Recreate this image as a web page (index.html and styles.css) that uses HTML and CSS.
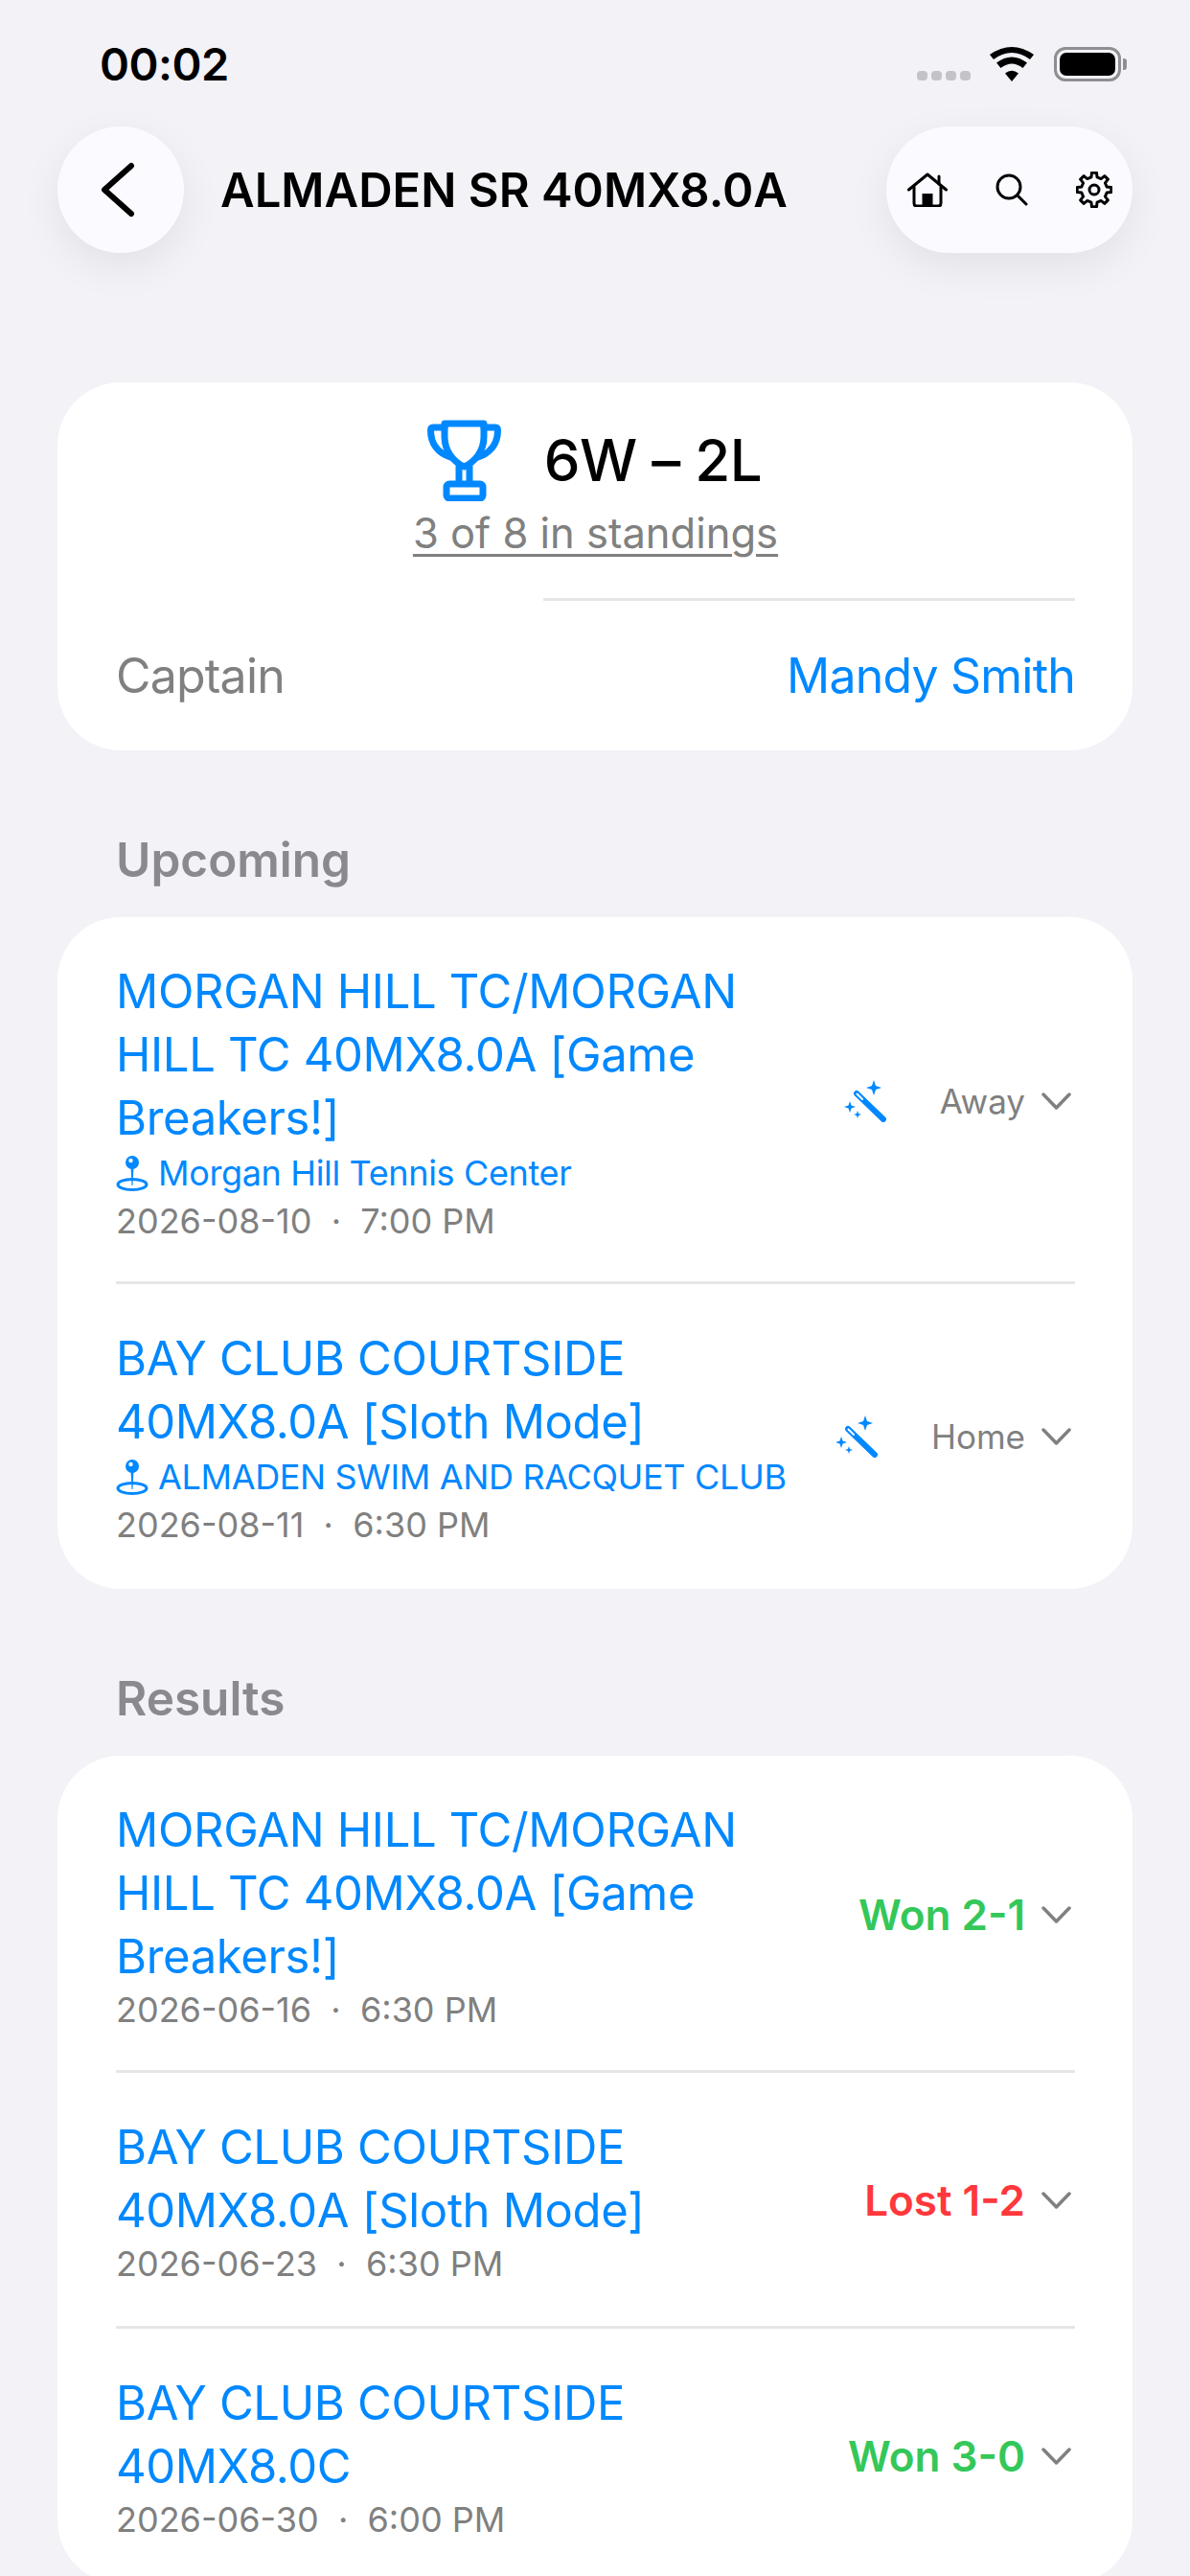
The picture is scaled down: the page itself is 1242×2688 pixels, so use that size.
FILE: index.html
```html
<!DOCTYPE html>
<html lang="en">
<head>
    <meta charset="UTF-8">
    <meta name="viewport" content="width=device-width, initial-scale=1.0">
    <title>ALMADEN SR 40MX8.0A</title>
    <link rel="stylesheet" href="styles.css">
</head>
<body>

    <!-- Status bar -->
    <div class="status-bar">
        <span class="status-time">00:02</span>
        <div class="status-icons">
            <div class="signal"><i></i><i></i><i></i><i></i></div>
            <svg class="wifi" viewBox="0 0 46 36"><path d="M23 36 L16 27.5 Q23 22 30 27.5Z"/><path d="M11.5 22 L7 16.5 Q23 4.5 39 16.5 L34.5 22 Q23 13 11.5 22Z"/><path d="M4 13 L0 8 Q23 -8 46 8 L42 13 Q23 -1 4 13Z"/></svg>
            <div class="battery"><div class="battery-level"></div></div>
        </div>
    </div>

    <!-- Nav bar -->
    <header class="nav-bar">
        <div class="back-button">
            <svg viewBox="0 0 36 58"><path d="M32 4 L4 29 L32 54"/></svg>
        </div>
        <h1 class="nav-title">ALMADEN SR 40MX8.0A</h1>
        <div class="nav-actions">
            <svg class="icon-home" viewBox="0 0 42 36"><path d="M1.5 18 L21 2 L40.5 18"/><path d="M33 4 V12"/><path d="M7 15 V32 Q7 35 10 35 H32 Q35 35 35 32 V15"/><rect class="solid" x="15.500" y="22" width="11" height="13"/></svg>
            <svg class="icon-search" viewBox="0 0 34 34"><circle cx="14" cy="14" r="12"/><path d="M23 23 L32 32"/></svg>
            <svg class="icon-gear" viewBox="0 0 38 38"><polygon points="15.96,5.85 16.5,1.18 21.5,1.18 22.04,5.85 26.15,7.55 29.83,4.62 33.38,8.17 30.45,11.85 32.15,15.96 36.82,16.5 36.82,21.5 32.15,22.04 30.45,26.15 33.38,29.83 29.83,33.38 26.15,30.45 22.04,32.15 21.5,36.82 16.5,36.82 15.96,32.15 11.85,30.45 8.17,33.38 4.62,29.83 7.55,26.15 5.85,22.04 1.18,21.5 1.18,16.5 5.85,15.96 7.55,11.85 4.62,8.17 8.17,4.62 11.85,7.55"/><circle cx="19" cy="19" r="5"/></svg>
        </div>
    </header>

    <!-- Team summary -->
    <section class="card summary-card">
        <div class="record">
            <svg class="trophy" viewBox="0 0 77 85"><path d="M18 4 H59 V18 C59 32 50 44 38.500 49 C27 44 18 32 18 18Z"/><path d="M18 8 H6 Q3.500 8 3.500 11 C3.500 26 12 35 24 39"/><path d="M59 8 H71 Q73.500 8 73.500 11 C73.500 26 65 35 53 39"/><path d="M33 49 V66 M44 49 V66"/><rect x="20" y="67" width="38" height="15" rx="3"/></svg>
            <span class="record-text">6W – 2L</span>
        </div>
        <div class="standings">3 of 8 in standings</div>
        <div class="divider"></div>
        <div class="captain-row">
            <span class="captain-label">Captain</span>
            <span class="captain-name">Mandy Smith</span>
        </div>
    </section>

    <!-- Upcoming -->
    <h2 class="section-title">Upcoming</h2>
    <section class="card">
        <div class="match">
            <div class="match-info">
                <div class="match-title">MORGAN HILL TC/MORGAN<br>HILL TC 40MX8.0A [Game<br>Breakers!]</div>
                <div class="match-place">
                    <svg class="pin" viewBox="0 0 34 38"><circle cx="17" cy="8" r="7"/><circle class="pin-dot" cx="15.500" cy="6" r="2.200"/><path d="M15.500 12 H18.500 L17.500 32 H16.500Z"/><ellipse class="pin-ring" cx="17" cy="31" rx="15" ry="5.500"/></svg>
                    <span>Morgan Hill Tennis Center</span>
                </div>
                <div class="match-date">2026-08-10 &nbsp;·&nbsp; 7:00 PM</div>
            </div>
            <div class="match-side">
                <svg class="wand" viewBox="0 0 44 44"><path d="M31 0 L33 6 L39 8 L33 10 L31 16 L29 10 L23 8 L29 6Z"/><path d="M6 22 L7.500 26.500 L12 28 L7.500 29.500 L6 34 L4.500 29.500 L0 28 L4.500 26.500Z"/><path d="M14 32 L15 35 L18 36 L15 37 L14 40 L13 37 L10 36 L13 35Z"/><path class="wand-stick" d="M13 14 L41 41"/><path class="wand-slit" d="M13.500 14.500 L19 20"/></svg>
                <span class="match-where">Away</span>
                <svg class="chevron" viewBox="0 0 31 18"><path d="M2 2 L15.500 16 L29 2"/></svg>
            </div>
        </div>
        <div class="match">
            <div class="match-info">
                <div class="match-title">BAY CLUB COURTSIDE<br>40MX8.0A [Sloth Mode]</div>
                <div class="match-place">
                    <svg class="pin" viewBox="0 0 34 38"><circle cx="17" cy="8" r="7"/><circle class="pin-dot" cx="15.500" cy="6" r="2.200"/><path d="M15.500 12 H18.500 L17.500 32 H16.500Z"/><ellipse class="pin-ring" cx="17" cy="31" rx="15" ry="5.500"/></svg>
                    <span>ALMADEN SWIM AND RACQUET CLUB</span>
                </div>
                <div class="match-date">2026-08-11 &nbsp;·&nbsp; 6:30 PM</div>
            </div>
            <div class="match-side">
                <svg class="wand" viewBox="0 0 44 44"><path d="M31 0 L33 6 L39 8 L33 10 L31 16 L29 10 L23 8 L29 6Z"/><path d="M6 22 L7.500 26.500 L12 28 L7.500 29.500 L6 34 L4.500 29.500 L0 28 L4.500 26.500Z"/><path d="M14 32 L15 35 L18 36 L15 37 L14 40 L13 37 L10 36 L13 35Z"/><path class="wand-stick" d="M13 14 L41 41"/><path class="wand-slit" d="M13.500 14.500 L19 20"/></svg>
                <span class="match-where">Home</span>
                <svg class="chevron" viewBox="0 0 31 18"><path d="M2 2 L15.500 16 L29 2"/></svg>
            </div>
        </div>
    </section>

    <!-- Results -->
    <h2 class="section-title">Results</h2>
    <section class="card">
        <div class="match">
            <div class="match-info">
                <div class="match-title">MORGAN HILL TC/MORGAN<br>HILL TC 40MX8.0A [Game<br>Breakers!]</div>
                <div class="match-date">2026-06-16 &nbsp;·&nbsp; 6:30 PM</div>
            </div>
            <div class="match-side">
                <span class="score won">Won 2-1</span>
                <svg class="chevron" viewBox="0 0 31 18"><path d="M2 2 L15.500 16 L29 2"/></svg>
            </div>
        </div>
        <div class="match">
            <div class="match-info">
                <div class="match-title">BAY CLUB COURTSIDE<br>40MX8.0A [Sloth Mode]</div>
                <div class="match-date">2026-06-23 &nbsp;·&nbsp; 6:30 PM</div>
            </div>
            <div class="match-side">
                <span class="score lost">Lost 1-2</span>
                <svg class="chevron" viewBox="0 0 31 18"><path d="M2 2 L15.500 16 L29 2"/></svg>
            </div>
        </div>
        <div class="match">
            <div class="match-info">
                <div class="match-title">BAY CLUB COURTSIDE<br>40MX8.0C</div>
                <div class="match-date">2026-06-30 &nbsp;·&nbsp; 6:00 PM</div>
            </div>
            <div class="match-side">
                <span class="score won">Won 3-0</span>
                <svg class="chevron" viewBox="0 0 31 18"><path d="M2 2 L15.500 16 L29 2"/></svg>
            </div>
        </div>
    </section>

</body>
</html>
```

FILE: styles.css
```css
/* General */
* {
    margin: 0;
    padding: 0;
    box-sizing: border-box;
}

html {
    height: 2688px;
    overflow: hidden;
}

body {
    height: 2688px;
    overflow: hidden;
    background-color: #f2f2f7;
    font-family: Inter, "Noto Sans", sans-serif;
    color: #000;
}

/* Status bar */
.status-bar {
    height: 132px;
    display: flex;
    justify-content: space-between;
    align-items: flex-start;
    padding: 38px 72px 0 104px;
}

.status-time {
    font-size: 47px;
    line-height: 58px;
    font-weight: 600;
    letter-spacing: -0.5px;
}

.status-icons {
    display: flex;
    align-items: flex-end;
    padding-top: 11px;
}

.signal {
    display: flex;
    gap: 4px;
    margin: 0 20px 0 0;
    padding-bottom: 1px;
}

.signal i {
    width: 11px;
    height: 10px;
    border-radius: 4px;
    background-color: #c4c4c8;
}

.wifi {
    width: 46px;
    height: 36px;
    fill: #000;
    margin-right: 21px;
}

.battery {
    position: relative;
    width: 70px;
    height: 36px;
    border: 3px solid #8e8e93;
    border-radius: 12px;
    padding: 3px;
}

/* battery nub */
.battery::after {
    content: "";
    position: absolute;
    right: -9px;
    top: 9px;
    width: 4px;
    height: 12px;
    border-radius: 0 3px 3px 0;
    background-color: #8e8e93;
}

.battery-level {
    height: 100%;
    border-radius: 7px;
    background-color: #000;
}

/* Nav bar */
.nav-bar {
    height: 132px;
    display: flex;
    align-items: center;
    padding: 0 60px;
}

.back-button {
    width: 132px;
    height: 132px;
    flex-shrink: 0;
    display: flex;
    align-items: center;
    justify-content: center;
    padding-right: 7px;
    border-radius: 50%;
    background-color: #fbfbff;
    box-shadow: 0 14px 44px rgba(0, 0, 0, 0.07);
}

.back-button svg {
    width: 36px;
    height: 58px;
    fill: none;
    stroke: #000;
    stroke-width: 6;
    stroke-linecap: round;
    stroke-linejoin: round;
}

.nav-title {
    flex: 1;
    margin-left: 38px;
    font-size: 49px;
    font-weight: 600;
    white-space: nowrap;
}

.nav-actions {
    width: 257px;
    height: 132px;
    flex-shrink: 0;
    display: flex;
    align-items: center;
    justify-content: space-between;
    padding: 0 21px 0 22px;
    border-radius: 66px;
    background-color: #fbfbff;
    box-shadow: 0 14px 44px rgba(0, 0, 0, 0.07);
}

.nav-actions svg {
    fill: none;
    stroke: #000;
    stroke-width: 3;
    stroke-linecap: round;
    stroke-linejoin: round;
}

.icon-home {
    width: 42px;
    height: 36px;
}

.icon-home .solid {
    fill: #000;
    stroke: none;
}

.icon-search {
    width: 34px;
    height: 34px;
}

.icon-gear {
    width: 38px;
    height: 38px;
}

/* Cards */
.card {
    margin: 0 60px;
    padding: 0 60px 0 61px;
    border-radius: 66px;
    background-color: #fff;
}

.summary-card {
    margin-top: 135px;
    height: 384px;
    padding-top: 38px;
}

.record {
    display: flex;
    align-items: center;
    justify-content: center;
    gap: 45px;
    height: 86px;
    padding-right: 2px;
}

.trophy {
    width: 77px;
    height: 85px;
    fill: none;
    stroke: #0088ff;
    stroke-width: 7;
    stroke-linejoin: round;
    stroke-linecap: round;
}

.record-text {
    font-size: 60px;
    font-weight: 500;
    letter-spacing: -0.5px;
}

.standings {
    margin-top: 6px;
    text-align: center;
    font-size: 43.500px;
    line-height: 54px;
    color: #808080;
    text-decoration: underline;
    text-decoration-thickness: 3px;
    text-underline-offset: 6px;
}

.divider {
    margin: 41px 0 0 446px;
    height: 3px;
    background-color: #e6e6e6;
}

.captain-row {
    display: flex;
    justify-content: space-between;
    align-items: center;
    height: 156px;
    font-size: 50px;
    letter-spacing: -0.8px;
}

.captain-label {
    color: #808080;
}

.captain-name {
    color: #0088ff;
}

.section-title {
    margin: 84px 0 30px 121px;
    height: 60px;
    line-height: 60px;
    font-size: 49.500px;
    font-weight: 600;
    color: #8a8a8e;
}

/* Match rows */
.match {
    display: flex;
    align-items: center;
    justify-content: space-between;
    padding: 45px 0 43px;
    border-bottom: 3px solid #e6e6e6;
}

.match:first-child {
    padding: 45px 0 41px;
}

.match:last-child {
    padding-bottom: 45px;
    border-bottom: none;
}

.match-title {
    font-size: 49px;
    line-height: 66px;
    letter-spacing: -0.350px;
    color: #0088ff;
    white-space: nowrap;
}

.match-place {
    display: flex;
    align-items: center;
    gap: 10px;
    height: 48px;
    margin-bottom: 4px;
    font-size: 36px;
    letter-spacing: -0.350px;
    color: #0088ff;
    white-space: nowrap;
}

.pin {
    width: 34px;
    height: 38px;
    fill: #0088ff;
    flex-shrink: 0;
}

.pin-dot {
    fill: #fff;
}

.pin-ring {
    fill: none;
    stroke: #0088ff;
    stroke-width: 3;
}

.match-date {
    height: 44px;
    line-height: 44px;
    font-size: 36px;
    color: #808080;
}

.match-side {
    display: flex;
    align-items: center;
    gap: 17px;
    padding-right: 4px;
}

.wand {
    width: 44px;
    height: 44px;
    fill: #0088ff;
    margin-right: 39px;
}

.wand-stick {
    fill: none;
    stroke: #0088ff;
    stroke-width: 6;
    stroke-linecap: round;
}

.wand-slit {
    fill: none;
    stroke: #fff;
    stroke-width: 2;
    stroke-linecap: round;
}

.match-where {
    font-size: 35px;
    color: #808080;
}

.chevron {
    width: 31px;
    height: 18px;
    fill: none;
    stroke: #808080;
    stroke-width: 3.5;
    stroke-linecap: round;
    stroke-linejoin: round;
}

.score {
    font-size: 44px;
    font-weight: 600;
}

.won {
    color: #34c759;
}

.lost {
    color: #ff383c;
}
```
